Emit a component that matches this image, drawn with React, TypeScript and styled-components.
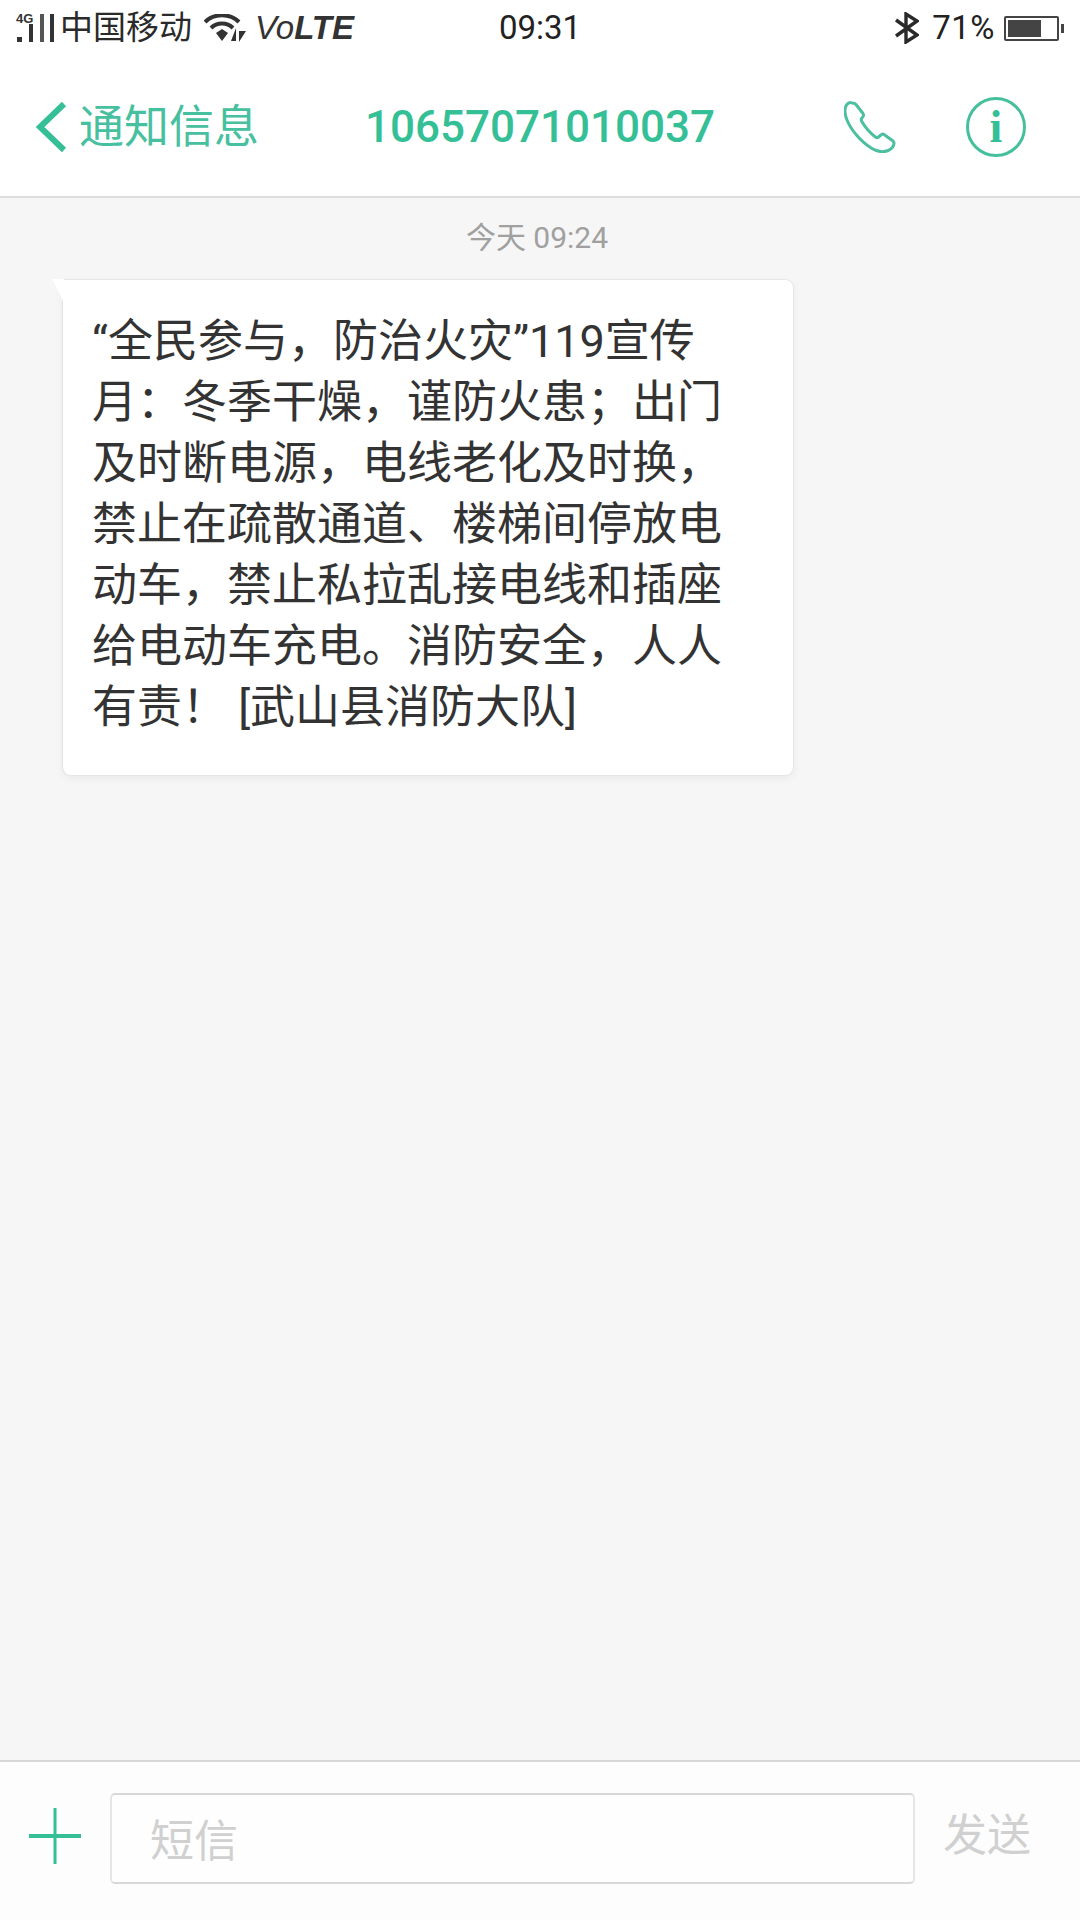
import React from "react";
import styled, { createGlobalStyle } from "styled-components";

const GREEN = "#35bf96";
const STACK = '"Roboto", "Noto Sans CJK SC", sans-serif';

const Global = createGlobalStyle`
  html, body { margin: 0; padding: 0; background: #f6f6f6; }
  * { box-sizing: border-box; }
`;

const Screen = styled.div`
  width: 1080px;
  height: 1920px;
  display: flex;
  flex-direction: column;
  overflow: hidden;
  font-family: ${STACK};
  background: #f6f6f6;
`;

const StatusBar = styled.div`
  height: 56px;
  flex: none;
  display: grid;
  grid-template-columns: 1fr auto 1fr;
  align-items: center;
  background: #fff;
  color: #222;
`;

const StatusLeft = styled.div`
  display: flex;
  align-items: center;
  padding-left: 16px;
`;

const Carrier = styled.span`
  margin-left: 6px;
  font-size: 33px;
  line-height: 40px;
  font-weight: 400;
  color: #2a2a2a;
`;

const WifiWrap = styled.span`
  display: flex;
  margin-left: 12px;
`;

const VoLte = styled.span`
  margin-left: 8px;
  font-family: "Liberation Sans", sans-serif;
  font-style: italic;
  font-size: 33px;
  line-height: 40px;
  color: #333;
  b { font-weight: 700; }
`;

const Clock = styled.span`
  font-size: 33px;
  line-height: 40px;
  color: #222;
`;

const StatusRight = styled.div`
  display: flex;
  align-items: center;
  justify-content: flex-end;
  padding-right: 21px;
`;

const Percent = styled.span`
  margin-left: 13px;
  font-size: 33px;
  line-height: 40px;
  font-weight: 400;
  letter-spacing: 0.5px;
  color: #222;
`;

const Battery = styled.span`
  position: relative;
  display: flex;
  width: 55px;
  height: 25px;
  margin-left: 9px;
  padding: 2px;
  border: 2px solid #444;
  border-radius: 2px;
  &::after {
    content: "";
    position: absolute;
    right: -7px;
    top: 6px;
    width: 3px;
    height: 9px;
    background: #444;
  }
`;

const BatteryFill = styled.span`
  display: block;
  height: 100%;
  background: #444;
`;

const Header = styled.header`
  height: 142px;
  flex: none;
  display: grid;
  grid-template-columns: 1fr auto 1fr;
  align-items: center;
  padding-top: 1px;
  background: #fff;
  border-bottom: 2px solid #dddddd;
`;

const BackGroup = styled.div`
  display: flex;
  align-items: center;
  padding-left: 36px;
`;

const BackLabel = styled.span`
  margin: 3px 0 0 12px;
  font-size: 45px;
  line-height: 60px;
  font-weight: 400;
  color: #47c0a0;
`;

const Title = styled.h1`
  margin: 0;
  font-size: 44px;
  line-height: 60px;
  font-weight: 500;
  color: ${GREEN};
`;

const Actions = styled.div`
  display: flex;
  align-items: center;
  justify-content: flex-end;
  gap: 70px;
  padding-right: 54px;
`;

const InfoBadge = styled.span`
  width: 60px;
  height: 60px;
  display: flex;
  align-items: center;
  justify-content: center;
  border: 3px solid #46bf9c;
  border-radius: 50%;
  font-family: "Liberation Serif", serif;
  font-size: 46px;
  font-weight: 700;
  line-height: 54px;
  color: ${GREEN};
`;

const Chat = styled.main`
  flex: 1;
  display: flex;
  flex-direction: column;
  align-items: flex-start;
  background: #f6f6f6;
`;

const Stamp = styled.div`
  align-self: stretch;
  margin-top: 20px;
  padding-right: 6px;
  text-align: center;
  font-size: 30px;
  line-height: 40px;
  color: #a0a0a0;
`;

const Bubble = styled.article`
  position: relative;
  width: 732px;
  margin: 21px 0 0 62px;
  padding: 31px 20px 37px 29px;
  background: #fff;
  border: 1px solid #e6e6e6;
  border-left-color: #e2e2e2;
  border-radius: 0 9px 9px 9px;
  box-shadow: 0 3px 8px rgba(0, 0, 0, 0.05);
  &::before {
    content: "";
    position: absolute;
    left: -11px;
    top: -1px;
    width: 12px;
    height: 24px;
    background: #fff;
    clip-path: polygon(0 0, 100% 0, 100% 100%);
  }
`;

const BubbleLine = styled.div`
  font-size: 45px;
  line-height: 61px;
  color: #333;
  white-space: nowrap;
`;

const Composer = styled.footer`
  height: 160px;
  flex: none;
  display: flex;
  align-items: flex-start;
  padding-top: 31px;
  background: #fdfdfd;
  border-top: 2px solid #d8d8d8;
`;

const PlusWrap = styled.span`
  display: flex;
  margin: 15px 0 0 29px;
`;

const InputBox = styled.div`
  width: 805px;
  height: 91px;
  margin-left: 29px;
  padding: 0 0 2px 38px;
  display: flex;
  align-items: center;
  background: #fefefe;
  border: 2px solid #d8d8d8;
  border-left-color: #e6e6e6;
  border-right-color: #e6e6e6;
  border-radius: 5px;
  font-size: 44px;
  font-weight: 400;
  color: #d0d0d0;
`;

const Send = styled.span`
  margin: 13px 0 0 28px;
  font-size: 44px;
  line-height: 60px;
  font-weight: 400;
  color: #d0d0d0;
`;

const lines = [
  "\u201C全民参与\uFF0C防治火灾\u201D119宣传",
  "月\uFF1A冬季干燥\uFF0C谨防火患\uFF1B出门",
  "及时断电源\uFF0C电线老化及时换\uFF0C",
  "禁止在疏散通道\u3001楼梯间停放电",
  "动车\uFF0C禁止私拉乱接电线和插座",
  "给电动车充电\u3002消防安全\uFF0C人人",
  "有责\uFF01 [武山县消防大队]",
];

const Signal = () => (
  <svg width="38" height="38" viewBox="0 -4 38 38">
    <text x="0" y="9.500" fontSize="13" fontWeight="700" fontFamily="Liberation Sans, sans-serif" fill="#333">4G</text>
    <rect x="1" y="24" width="5" height="5" fill="#333" />
    <rect x="13" y="11" width="4" height="18" fill="#333" />
    <rect x="24" y="1" width="4" height="28" fill="#555" />
    <rect x="34" y="1" width="4" height="28" fill="#333" />
  </svg>
);

const Wifi = () => (
  <svg width="43" height="28" viewBox="0 0 43 28" fill="none">
    <path d="M1 8 C10 -1 26 -1 35 8" stroke="#333" strokeWidth="4" />
    <path d="M7 14 C13 8 23 8 29 14" stroke="#333" strokeWidth="4" />
    <path d="M12 19 L18 15 L24 19 L18 27 Z" fill="#333" />
    <path d="M32 14 L32 27 L27 27 Z M35 15 L35 28 L42 17 L35 17 Z" fill="#333" />
  </svg>
);

const Bluetooth = () => (
  <svg width="24" height="32" viewBox="0 0 24 32" fill="none">
    <path d="M1 8 L22 23 L11 30 L11 2 L22 9 L1 24" stroke="#2a2a2a" strokeWidth="3.4" />
  </svg>
);

const Chevron = () => (
  <svg width="31" height="52" viewBox="0 0 31 52" fill="none">
    <path d="M28 3 L4 26 L28 49" stroke="#35bf96" strokeWidth="6" />
  </svg>
);

const PhoneIcon = () => (
  <svg width="52" height="52" viewBox="0 0 52 52" fill="none">
    <path
      d="M8 2 C6 1 4 2 2.500 4 C0 8 1 14 3 19 C7 29 17 41 28 47.500 C33 50.500 39 51.500 44 49.500 C47.500 48 50 45 50 42 C50 41 49.500 40.500 49 40 L40 33.500 C39 32.800 38 33 37 34 L34.500 36 C33.500 36.800 32.500 36.800 31.500 36 C26 32 21 26 17.500 20 C17 19 17 18 18 17 L19 15.500 C19.700 14.500 19.700 13.500 19 12.500 L12 3.500 C11 2.300 9.500 2 8 2 Z"
      stroke="#4cbf9f"
      strokeWidth="3"
      strokeLinejoin="round"
    />
  </svg>
);

const Plus = () => (
  <svg width="52" height="56" viewBox="0 0 52 56">
    <rect x="24.500" y="0" width="3" height="56" fill="#35bf96" />
    <rect x="0" y="26" width="52" height="4" fill="#35bf96" />
  </svg>
);

export default function App() {
  return (
    <Screen>
      <Global />
      <StatusBar>
        <StatusLeft>
          <Signal />
          <Carrier>中国移动</Carrier>
          <WifiWrap>
            <Wifi />
          </WifiWrap>
          <VoLte>
            Vo<b>LTE</b>
          </VoLte>
        </StatusLeft>
        <Clock>09:31</Clock>
        <StatusRight>
          <Bluetooth />
          <Percent>71%</Percent>
          <Battery>
            <BatteryFill style={{ width: "71%" }} />
          </Battery>
        </StatusRight>
      </StatusBar>
      <Header>
        <BackGroup>
          <Chevron />
          <BackLabel>通知信息</BackLabel>
        </BackGroup>
        <Title>10657071010037</Title>
        <Actions>
          <PhoneIcon />
          <InfoBadge>i</InfoBadge>
        </Actions>
      </Header>
      <Chat>
        <Stamp>今天 09:24</Stamp>
        <Bubble>
          {lines.map((l) => (
            <BubbleLine key={l}>{l}</BubbleLine>
          ))}
        </Bubble>
      </Chat>
      <Composer>
        <PlusWrap>
          <Plus />
        </PlusWrap>
        <InputBox>短信</InputBox>
        <Send>发送</Send>
      </Composer>
    </Screen>
  );
}
